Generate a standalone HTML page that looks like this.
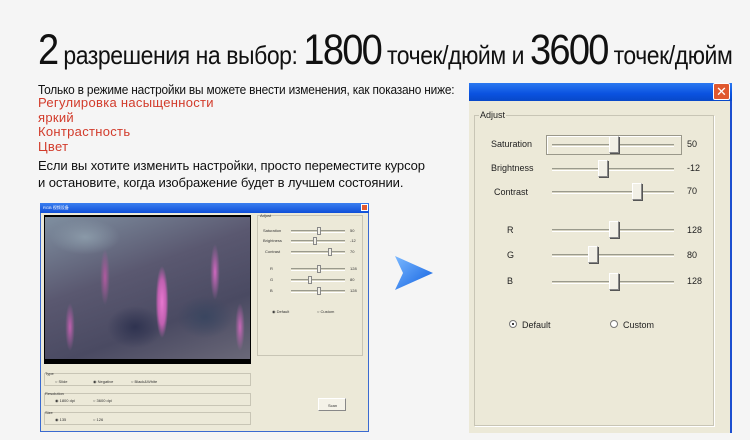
<!DOCTYPE html>
<html><head><meta charset="utf-8"><style>
*{margin:0;padding:0;box-sizing:border-box}
body{width:750px;height:440px;background:#f5f5f5;position:relative;overflow:hidden;font-family:"Liberation Sans","DejaVu Sans",sans-serif}
.a{position:absolute}
.t{white-space:nowrap}
.lab{font-size:9px;color:#222;position:absolute;white-space:nowrap}
.trk{position:absolute;height:3px;border-top:1px solid #9a9a8c;border-bottom:1px solid #fff;background:#d6d3c2}
.th{position:absolute;width:10px;height:17px;background:#f2f0e6;border:1px solid #888;border-top-color:#fff;border-left-color:#fff;box-shadow:1px 1px 0 #555}
.rad{position:absolute;width:8px;height:8px;border-radius:50%;border:1px solid #777;background:#fff}
.sth{position:absolute;width:4px;height:8px;background:#f2f0e6;border:1px solid #888}
.s{font-size:4px;color:#333;position:absolute;white-space:nowrap}
</style></head><body>
<div class="a t" style="left:38px;top:26px;font-size:43px;color:#111;letter-spacing:-2px;transform:scaleX(0.885);transform-origin:0 0">2<span style="font-size:26px;letter-spacing:-0.5px"> разрешения на выбор: </span>1800<span style="font-size:26px;letter-spacing:-0.5px"> точек/дюйм и </span>3600<span style="font-size:26px;letter-spacing:-0.5px"> точек/дюйм</span></div>
<div class="a t" style="left:38px;top:83px;font-size:12.5px;color:#111;letter-spacing:-0.2px;transform:scaleX(0.95);transform-origin:0 0">Только в режиме настройки вы можете внести изменения, как показано ниже:</div>
<div class="a" style="left:38px;top:96px;font-size:13px;line-height:14.5px;color:#d23b2b;letter-spacing:0.3px">Регулировка насыщенности<br>яркий<br>Контрастность<br>Цвет</div>
<div class="a t" style="left:38px;top:157px;font-size:13.3px;line-height:17px;color:#111;letter-spacing:-0.1px;transform:scaleX(0.98);transform-origin:0 0">Если вы хотите изменить настройки, просто переместите курсор<br>и остановите, когда изображение будет в лучшем состоянии.</div>

<!-- small window -->
<div class="a" style="left:40px;top:203px;width:329px;height:229px;background:#ece9d8;border:1px solid #3a6ad0"></div>
<div class="a" style="left:40px;top:203px;width:329px;height:10px;background:linear-gradient(#3a7ff0,#0f4fd8)"><span class="s" style="left:3px;top:2px;color:#fff">RGB 视频设备</span><div class="a" style="right:1px;top:1px;width:7px;height:7px;background:#e25a30;border:1px solid #fff"></div></div>
<div class="a" style="left:44px;top:215px;width:207px;height:149px;background:#000"></div>
<div class="a" style="left:45px;top:217px;width:205px;height:142px;background:
radial-gradient(ellipse 8px 45px at 117px 85px,#e878d0 0,#c060b0 50%,transparent 80%),
radial-gradient(ellipse 6px 35px at 60px 60px,#b05aa0,transparent 80%),
radial-gradient(ellipse 6px 35px at 170px 55px,#d068c0,transparent 80%),
radial-gradient(ellipse 6px 30px at 25px 110px,#c060b0,transparent 80%),
radial-gradient(ellipse 6px 30px at 195px 110px,#c868b8,transparent 80%),
radial-gradient(ellipse 40px 30px at 90px 110px,#2f3350,transparent 70%),
radial-gradient(ellipse 40px 30px at 160px 100px,#3a4660,transparent 70%),
radial-gradient(ellipse 50px 25px at 40px 20px,#8a99a8,transparent 70%),
linear-gradient(160deg,#7f8fa0,#5a5870 40%,#4a4a62 70%,#6a6878)"></div>
<div class="a" style="left:257px;top:215px;width:106px;height:141px;border:1px solid #c8c5b5"></div>
<span class="s" style="left:260px;top:213px">Adjust</span>
<span class="s" style="left:263px;top:228px">Saturation</span><span class="s" style="left:263px;top:238px">Brightness</span><span class="s" style="left:265px;top:249px">Contrast</span>
<span class="s" style="left:270px;top:266px">R</span><span class="s" style="left:270px;top:277px">G</span><span class="s" style="left:270px;top:288px">B</span>
<span class="s" style="left:350px;top:228px">50</span><span class="s" style="left:350px;top:238px">-12</span><span class="s" style="left:350px;top:249px">70</span><span class="s" style="left:350px;top:266px">128</span><span class="s" style="left:350px;top:277px">80</span><span class="s" style="left:350px;top:288px">128</span>
<div class="trk" style="left:291px;top:230px;width:54px"></div><div class="sth" style="left:317px;top:227px"></div>
<div class="trk" style="left:291px;top:240px;width:54px"></div><div class="sth" style="left:313px;top:237px"></div>
<div class="trk" style="left:291px;top:251px;width:54px"></div><div class="sth" style="left:328px;top:248px"></div>
<div class="trk" style="left:291px;top:268px;width:54px"></div><div class="sth" style="left:317px;top:265px"></div>
<div class="trk" style="left:291px;top:279px;width:54px"></div><div class="sth" style="left:308px;top:276px"></div>
<div class="trk" style="left:291px;top:290px;width:54px"></div><div class="sth" style="left:317px;top:287px"></div>
<span class="s" style="left:272px;top:309px">◉ Default</span><span class="s" style="left:317px;top:309px">○ Custom</span>
<div class="a" style="left:44px;top:373px;width:207px;height:13px;border:1px solid #c8c5b5"></div><span class="s" style="left:45px;top:371px">Type</span>
<span class="s" style="left:55px;top:379px">○ Slide</span><span class="s" style="left:93px;top:379px">◉ Negative</span><span class="s" style="left:131px;top:379px">○ Black&amp;White</span>
<div class="a" style="left:44px;top:393px;width:207px;height:13px;border:1px solid #c8c5b5"></div><span class="s" style="left:45px;top:391px">Resolution</span>
<span class="s" style="left:55px;top:398px">◉ 1800 dpi</span><span class="s" style="left:93px;top:398px">○ 3600 dpi</span>
<div class="a" style="left:44px;top:412px;width:207px;height:13px;border:1px solid #c8c5b5"></div><span class="s" style="left:45px;top:410px">Size</span>
<span class="s" style="left:55px;top:417px">◉ 135</span><span class="s" style="left:93px;top:417px">○ 126</span>
<div class="a" style="left:318px;top:398px;width:28px;height:13px;background:#f4f2e8;border:1px solid #888;border-top-color:#fff;border-left-color:#fff"><span class="s" style="left:9px;top:4px">Scan</span></div>

<!-- arrow -->
<svg class="a" style="left:393px;top:254px" width="42" height="38"><defs><linearGradient id="g" x1="0" y1="0" x2="1" y2="1"><stop offset="0" stop-color="#7ab8ff"/><stop offset="1" stop-color="#1060e0"/></linearGradient></defs><polygon points="2,2 40,19 2,36 10,19" fill="url(#g)"/></svg>

<!-- big dialog -->
<div class="a" style="left:469px;top:83px;width:263px;height:350px;background:#ece9d8;border-right:2px solid #1c4fd0"></div>
<div class="a" style="left:469px;top:83px;width:263px;height:18px;background:linear-gradient(#2a78f0,#0a52e0 60%,#0848c8)"></div>
<div class="a" style="left:713px;top:83px;width:17px;height:17px;background:#e0582e;border:1px solid #fff;border-radius:2px;color:#fff;font-size:13px;line-height:15px;text-align:center;font-weight:bold">✕</div>
<div class="a" style="left:474px;top:115px;width:240px;height:311px;border:1px solid #c8c5b5;box-shadow:1px 1px 0 #fff"></div>
<div class="lab" style="left:479px;top:110px;background:#ece9d8;padding:0 1px">Adjust</div>
<div class="a" style="left:546px;top:135px;width:136px;height:20px;border:1px solid #9a988a;box-shadow:inset 1px 1px 0 #fff"></div>
<div class="lab" style="left:491px;top:139px">Saturation</div>
<div class="lab" style="left:491px;top:163px">Brightness</div>
<div class="lab" style="left:494px;top:187px">Contrast</div>
<div class="lab" style="left:507px;top:225px">R</div>
<div class="lab" style="left:507px;top:250px">G</div>
<div class="lab" style="left:507px;top:276px">B</div>
<div class="lab" style="left:687px;top:139px">50</div>
<div class="lab" style="left:687px;top:163px">-12</div>
<div class="lab" style="left:687px;top:186px">70</div>
<div class="lab" style="left:687px;top:225px">128</div>
<div class="lab" style="left:687px;top:250px">80</div>
<div class="lab" style="left:687px;top:276px">128</div>
<div class="trk" style="left:552px;top:144px;width:122px"></div><div class="th" style="left:609px;top:136px"></div>
<div class="trk" style="left:552px;top:168px;width:122px"></div><div class="th" style="left:598px;top:160px"></div>
<div class="trk" style="left:552px;top:191px;width:122px"></div><div class="th" style="left:632px;top:183px"></div>
<div class="trk" style="left:552px;top:229px;width:122px"></div><div class="th" style="left:609px;top:221px"></div>
<div class="trk" style="left:552px;top:254px;width:122px"></div><div class="th" style="left:588px;top:246px"></div>
<div class="trk" style="left:552px;top:281px;width:122px"></div><div class="th" style="left:609px;top:273px"></div>
<div class="rad" style="left:509px;top:320px"><div class="a" style="left:2px;top:2px;width:2px;height:2px;background:#000;border-radius:50%"></div></div>
<div class="lab" style="left:522px;top:320px">Default</div>
<div class="rad" style="left:610px;top:320px"></div>
<div class="lab" style="left:623px;top:320px">Custom</div>
</body></html>
